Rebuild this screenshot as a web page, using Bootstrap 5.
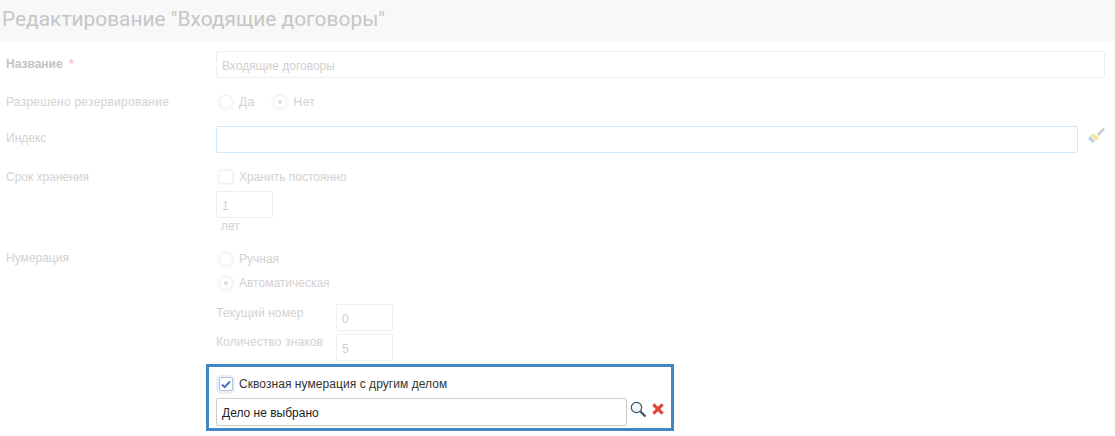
<!DOCTYPE html>
<html lang="ru"><head><meta charset="utf-8"><title>Редактирование</title>
<link href="https://cdn.jsdelivr.net/npm/bootstrap@5.3.0/dist/css/bootstrap.min.css" rel="stylesheet">
<style>
html,body{height:436px;overflow:hidden}
body{font-family:"Liberation Sans",Arial,sans-serif;font-size:12px;line-height:16px;color:#d2d2d2;background:#fff}
.page-head{height:41px;background:#f8f8f8;padding:5px 0 0 2px}
.page-head h1{margin:0;font:400 20.9px/28px Roboto,sans-serif;color:#c6c6c6}
.form-body{padding:10px 10px 0 6px}
.frow{display:flex}
.flabel{width:210px;flex:none}
.flabel b{color:#c4c4c4}.req{color:#f8c4c4;font-weight:700;margin-left:3px}
.wide-label{letter-spacing:.25px}
.ffield{flex:1;min-width:0}
.tinput{height:27px;border:1px solid #efefef;border-radius:2px;padding:6px 5px 0;color:#cfcfcf;display:block;background:#fff}
.tinput.focus{border-color:#d3e8fb}
.tinput.num{width:57px}
.optline{display:flex;align-items:center;height:24px;gap:4px}
.mk{width:19px;height:19px;display:flex;align-items:center;justify-content:center;flex:none;background:#fbfbfd;border-radius:5px}
.mk i{display:block;width:14px;height:14px;background:#fff;border:1px solid #eee;border-radius:2px}
.mk.rd{border-radius:50%}.mk.rd i{border-radius:50%;position:relative}
.mk.rd.on i::after{content:"";position:absolute;left:4px;top:4px;width:4px;height:4px;border-radius:50%;background:#d5deed}
.nrow{display:flex;width:177px;justify-content:space-between}
.hl{border:3px solid #3f88c5;width:468px;height:67px;margin:0 0 0 -10px;padding:5px 0 0 7px;color:#333}
.hl .mk{background:#e9eff8}.hl .mk i{border-color:#b9c3d0;display:flex;align-items:center;justify-content:center}
.hl .tinput{width:411px;height:28px;border-color:#ccc;color:#222;padding-top:6px}
.hl .optline{letter-spacing:.06px}
.brush{margin:1px 0 0 10px;flex:none}
.row2{height:44px;margin-top:12px}
.row2 .optline{letter-spacing:.4px}
.tool{align-self:flex-start;margin-top:3px}
</style></head><body>
<div class="page-head"><h1>Редактирование "Входящие договоры"</h1></div>
<div class="form-body">
 <div class="frow"><div class="flabel" style="padding-top:5px"><b>Название</b> <span class="req">*</span></div><div class="ffield"><div class="tinput">Входящие договоры</div></div></div>
 <div class="frow row2"><div class="flabel pt-1 wide-label">Разрешено резервирование</div><div class="ffield"><div class="d-flex gap-2"><div class="optline"><span class="mk rd"><i></i></span>Да</div><div class="optline ms-2"><span class="mk rd on"><i></i></span>Нет</div></div></div></div>
 <div class="frow" style="margin-top:-8px"><div class="flabel pt-1">Индекс</div><div class="ffield d-flex"><div class="tinput focus flex-grow-1"></div><svg class="brush" width="17" height="16" viewBox="0 0 17 16"><path d="M9 7l6-6 2 1-6 7z" fill="#c9c9c9"/><path d="M5 6l6 5-3 3-6-5z" fill="#f7e8a0"/><path d="M2 9l5 5-2 2-5-4z" fill="#bcd0ea"/></svg></div></div>
 <div class="frow mt-3"><div class="flabel">Срок хранения</div><div class="ffield"><div class="optline" style="margin-top:-4px"><span class="mk"><i></i></span>Хранить постоянно</div><div class="tinput num" style="margin-top:2px">1</div><div class="ps-1" style="margin-left:1px">лет</div></div></div>
 <div class="frow" style="margin-top:17px"><div class="flabel" style="margin-top:-1px">Нумерация</div><div class="ffield"><div class="optline" style="margin-top:-4px"><span class="mk rd"><i></i></span>Ручная</div><div class="optline"><span class="mk rd on"><i></i></span>Автоматическая</div>
  <div class="nrow" style="margin-top:9px"><span style="padding-top:1px;letter-spacing:.1px">Текущий номер</span><div class="tinput num">0</div></div>
  <div class="nrow" style="margin-top:3px"><span style="letter-spacing:.12px">Количество знаков</span><div class="tinput num">5</div></div>
  <div class="hl" style="margin-top:3px">
   <div class="optline"><span class="mk"><i><svg width="10" height="9" viewBox="0 0 10 9"><path d="M1 4.5l2.6 2.6L9 1.5" fill="none" stroke="#3f74c0" stroke-width="2"/></svg></i></span>Сквозная нумерация с другим делом</div>
   <div class="d-flex" style="margin-top:2px"><div class="tinput">Дело не выбрано</div>
    <svg class="tool" style="margin-left:3px" width="17" height="17" viewBox="0 0 17 17"><circle cx="6.5" cy="6.5" r="5.2" fill="#eef6fb" stroke="#44505c" stroke-width="1.2"/><path d="M10.5 10.5l5 5" stroke="#44505c" stroke-width="2.2"/></svg>
    <svg class="tool" style="margin:5px 0 0 5px" width="12" height="12" viewBox="0 0 13 13"><path d="M1.5 1.5l10 10M11.5 1.5l-10 10" stroke="#e2453c" stroke-width="3.4"/></svg></div>
  </div>
 </div></div>
</div>
<script src="https://cdn.jsdelivr.net/npm/bootstrap@5.3.0/dist/js/bootstrap.bundle.min.js"></script>
</body></html>
